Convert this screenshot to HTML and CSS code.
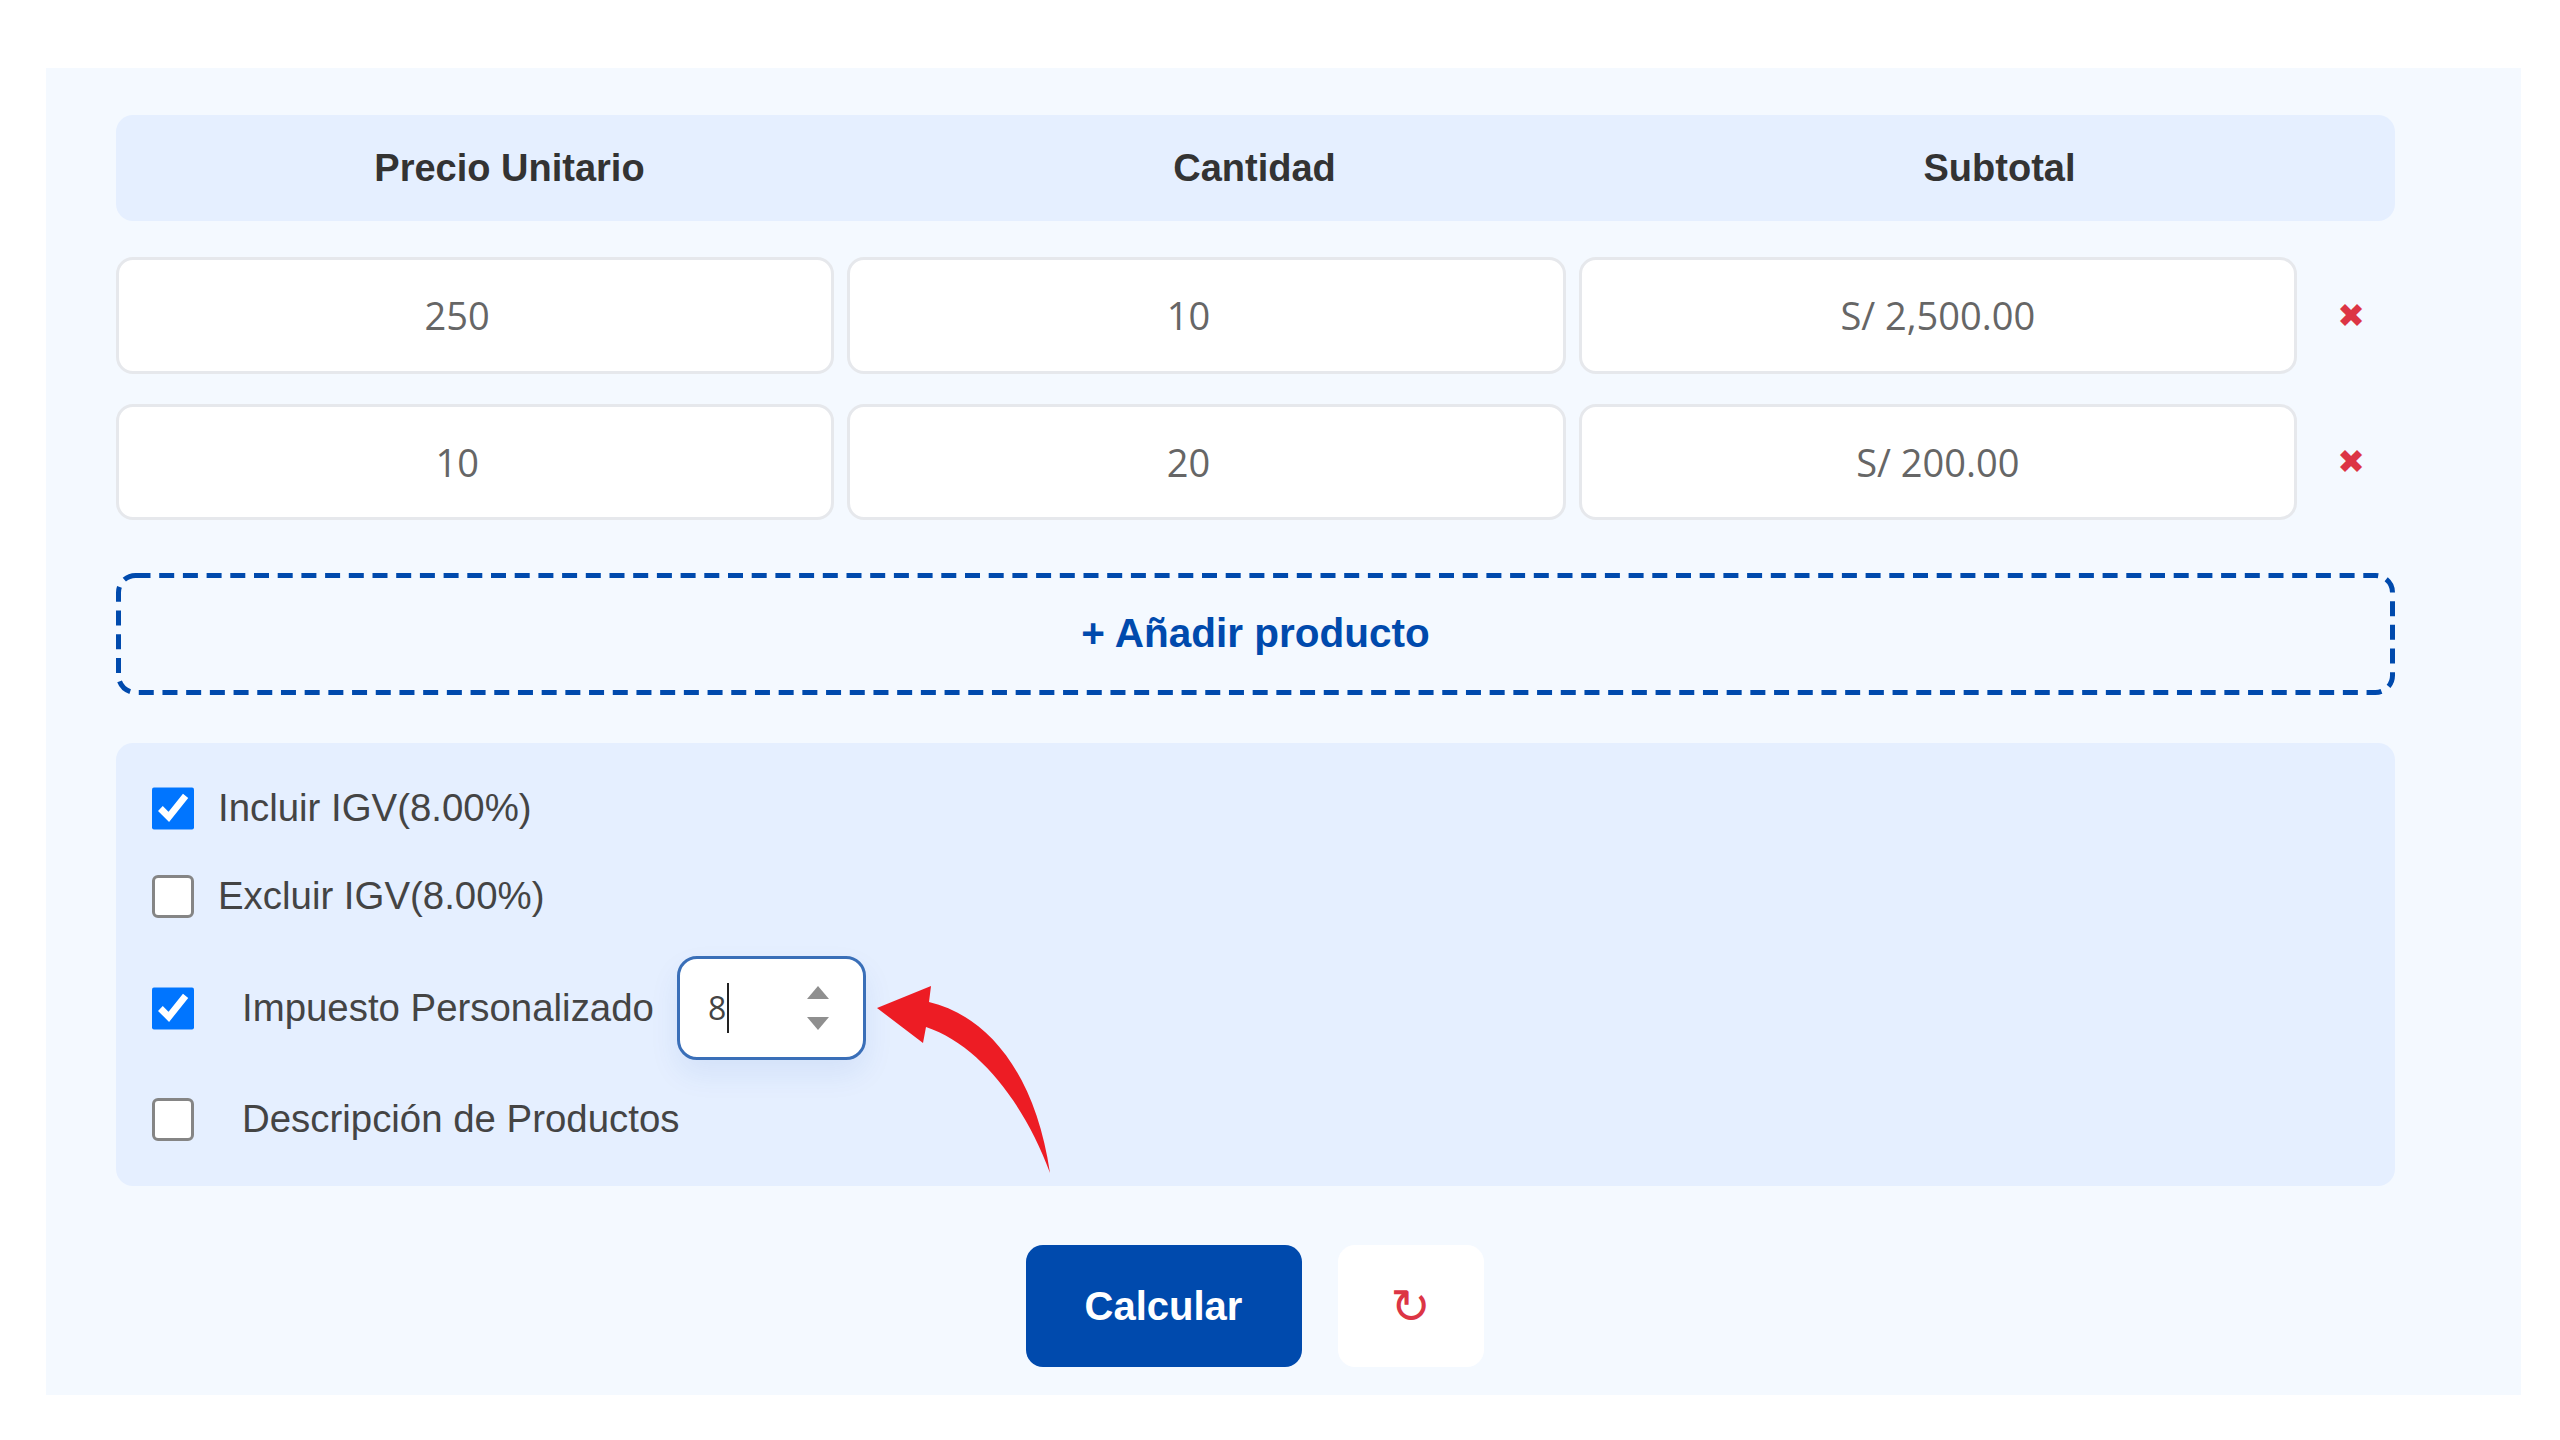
FILE: index.html
```html
<!DOCTYPE html>
<html lang="es">
<head>
    <meta charset="UTF-8">
    <title>Calculadora de IGV</title>
    <link rel="stylesheet" href="styles.css">
</head>
<body>
    <div class="calculator">
        <div class="table-header">
            <div>Precio Unitario</div>
            <div>Cantidad</div>
            <div>Subtotal</div>
        </div>

        <div class="product-row">
            <div class="field field-number">250</div>
            <div class="field field-number">10</div>
            <div class="field">S/ 2,500.00</div>
            <div class="remove">✖</div>
        </div>
        <div class="product-row">
            <div class="field field-number">10</div>
            <div class="field field-number">20</div>
            <div class="field">S/ 200.00</div>
            <div class="remove">✖</div>
        </div>

        <div class="add-product">
            <svg class="dash-border" width="100%" height="100%"><rect x="2.5" y="2.5" rx="17" ry="17"/></svg>
            + Añadir producto
        </div>

        <div class="options">
            <label class="option option-first">
                <input type="checkbox" checked>
                <span>Incluir IGV(8.00%)</span>
            </label>
            <label class="option">
                <input type="checkbox">
                <span>Excluir IGV(8.00%)</span>
            </label>
            <div class="option option-wide">
                <input type="checkbox" checked>
                <span>Impuesto Personalizado</span>
                <div class="tax-input">
                    <span class="tax-value">8</span>
                    <span class="caret"></span>
                    <svg class="spinner" width="22" height="44" viewBox="0 0 22 44">
                        <path d="M11 0 L22 13 L0 13 Z" fill="#8f8f8f"/>
                        <path d="M0 31 L22 31 L11 44 Z" fill="#8f8f8f"/>
                    </svg>
                </div>
            </div>
            <label class="option option-wide">
                <input type="checkbox">
                <span>Descripción de Productos</span>
            </label>

            <!-- flecha roja encima del panel -->
            <svg class="arrow" width="190" height="200" viewBox="0 0 190 200">
                <path d="M7 28 L61 6 L59 22 C115 35 165 90 180 193 C155 125 110 65 56 47 L53 63 Z" fill="#ed1c24"/>
            </svg>
        </div>

        <div class="actions">
            <div class="btn-calc">Calcular</div>
            <div class="btn-reset">↻</div>
        </div>
    </div>
</body>
</html>
```

FILE: styles.css
```css
body {
    margin: 0;
    background-color: #ffffff;
    font-family: "Liberation Sans", Arial, sans-serif;
}

.calculator {
    box-sizing: border-box;
    width: 2475px;
    height: 1327px;
    margin: 68px 0 0 46px;
    padding: 47px 126px 0 70px;
    background-color: #f4f9ff;
}

.table-header {
    display: grid;
    grid-template-columns: repeat(3, 1fr);
    gap: 20px;
    height: 106px;
    padding: 0 33px 0 31px;
    align-items: center;
    text-align: center;
    font-size: 38px;
    font-weight: bold;
    color: #333333;
    background-color: #e5efff;
    border-radius: 17px;
}

.product-row {
    display: grid;
    grid-template-columns: repeat(3, 1fr) 85px;
    gap: 13px;
    margin-top: 30px;
}

.table-header + .product-row {
    margin-top: 36px;
}

.field {
    box-sizing: border-box;
    height: 116.5px;
    display: flex;
    align-items: center;
    justify-content: center;
    font-family: "Open Sans", sans-serif;
    font-size: 38px;
    color: #666666;
    background-color: #ffffff;
    border: 3px solid #e6e8ec;
    border-radius: 17px;
}

.field-number {
    padding-right: 36px;
}

.remove {
    display: flex;
    align-items: center;
    justify-content: center;
    padding-right: 3px;
    font-family: "DejaVu Sans", sans-serif;
    font-size: 33px;
    color: #dc3545;
}

.add-product {
    position: relative;
    box-sizing: border-box;
    height: 122px;
    margin-top: 53px;
    padding-bottom: 2px;
    display: flex;
    align-items: center;
    justify-content: center;
    font-size: 40.5px;
    font-weight: bold;
    color: #004aad;
}

.dash-border {
    position: absolute;
    left: 0;
    top: 0;
}

.dash-border rect {
    width: calc(100% - 5px);
    height: calc(100% - 5px);
    fill: none;
    stroke: #004aad;
    stroke-width: 5px;
    stroke-dasharray: 15 8.7;
}

.options {
    position: relative;
    box-sizing: border-box;
    height: 443px;
    margin-top: 48px;
    padding: 44px 36px 0;
    display: flex;
    flex-direction: column;
    gap: 38px;
    background-color: #e5efff;
    border-radius: 17px;
    font-size: 38.4px;
    line-height: 1;
    color: #444444;
}

.option {
    display: flex;
    align-items: center;
    gap: 24px;
}

.option input {
    width: 42px;
    height: 43px;
    margin: 0;
}

.option input:not(:checked) {
    appearance: none;
    box-sizing: border-box;
    background-color: #ffffff;
    border: 3px solid #858585;
    border-radius: 6px;
}

.option-first {
    margin-bottom: 7px;
}

.option-wide {
    gap: 48px;
}

.tax-input {
    box-sizing: border-box;
    width: 189px;
    height: 104px;
    margin-left: -25px;
    padding: 0 34px 0 28px;
    display: flex;
    align-items: center;
    font-family: "Open Sans", sans-serif;
    font-size: 32px;
    color: #444444;
    background-color: #ffffff;
    border: 3px solid #3a6fb8;
    border-radius: 20px;
    box-shadow: 0 14px 30px rgba(0, 74, 173, 0.08);
}

.caret {
    width: 2px;
    height: 50px;
    margin-left: 1px;
    background-color: #222222;
}

.spinner {
    margin-left: auto;
}

.arrow {
    position: absolute;
    left: 754px;
    top: 237px;
}

.actions {
    display: flex;
    justify-content: center;
    gap: 36px;
    margin-top: 59px;
    padding-right: 2px;
}

.btn-calc {
    width: 276px;
    height: 122px;
    display: flex;
    align-items: center;
    justify-content: center;
    font-size: 40px;
    font-weight: bold;
    color: #ffffff;
    background-color: #004aad;
    border-radius: 17px;
}

.btn-reset {
    width: 146px;
    height: 122px;
    display: flex;
    align-items: center;
    justify-content: center;
    font-family: "DejaVu Sans", sans-serif;
    font-size: 48px;
    color: #dc3545;
    background-color: #ffffff;
    border-radius: 17px;
}
```
